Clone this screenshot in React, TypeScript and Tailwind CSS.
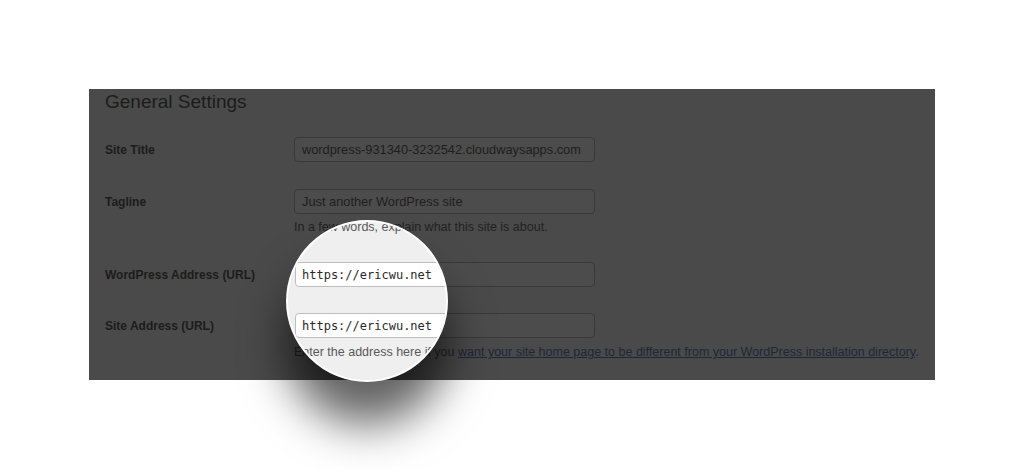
const rows = [
  { label: 'Site Title', value: 'wordpress-931340-3232542.cloudwaysapps.com', mt: 'mt-[23px]' },
  { label: 'Tagline', value: 'Just another WordPress site', mt: 'mt-[27px]' },
];

function DarkInput({ value }: { value?: string }) {
  return (
    <div className="w-[301px] h-[25px] rounded-[4px] border border-[#393939] bg-[#4c4c4c] px-[7px] flex items-center text-[12.8px] text-[#1e1e1e] whitespace-nowrap overflow-hidden">
      {value}
    </div>
  );
}

function Magnifier() {
  return (
    <div className="absolute left-[197px] top-[131px] w-[162px] h-[162px] rounded-full border-2 border-white bg-[#efefef] overflow-hidden shadow-[0_42px_46px_rgba(0,0,0,0.62)]">
      <p className="absolute left-[6px] top-[-4px] leading-[18px] text-[12.5px] text-[#5a5a5a] whitespace-nowrap">
        In a few words, explain what
      </p>
      {[40, 91].map(t => (
        <div
          key={t}
          className="absolute left-[7px] w-[300px] h-[25px] rounded-[4px] border border-[#bdbdbd] bg-white pl-[6px] flex items-center text-[12px] text-[#2a2a2a] whitespace-nowrap"
          style={{ top: t, fontFamily: '"DejaVu Sans Mono", monospace' }}
        >
          https://ericwu.net
        </div>
      ))}
      <p className="absolute left-[6px] top-[121px] leading-[18px] text-[12.5px] text-[#5a5a5a] whitespace-nowrap">
        Enter the address here if you
      </p>
    </div>
  );
}

export default function App() {
  return (
    <div className="w-[1024px] h-[470px] bg-white overflow-hidden pt-[89px]" style={{ fontFamily: '"Liberation Sans", Arial, sans-serif' }}>
      <div className="relative ml-[89px] w-[846px] bg-[#4a4a4a] pl-[16px] pt-[1px] pb-[19px] text-[#1c1c1c]">
        <h1 className="text-[19px] leading-[24px]">General Settings</h1>

        {rows.map(r => (
          <div key={r.label} className={`${r.mt} flex items-center`}>
            <span className="w-[189px] text-[12px] font-bold">{r.label}</span>
            <DarkInput value={r.value} />
          </div>
        ))}
        <p className="mt-[4px] ml-[189px] text-[12.5px] leading-[18px] text-[#222]">
          In a few words, explain what this site is about.
        </p>

        <div className="mt-[26px] flex items-center">
          <span className="w-[189px] text-[12px] font-bold">WordPress Address (URL)</span>
          <DarkInput />
        </div>
        <div className="mt-[26px] flex items-center">
          <span className="w-[189px] text-[12px] font-bold">Site Address (URL)</span>
          <DarkInput />
        </div>
        <p className="mt-[5px] ml-[189px] text-[12.5px] leading-[18px] text-[#222] whitespace-nowrap">
          Enter the address here if you{' '}
          <span className="underline text-[#1b2838]">
            want your site home page to be different from your WordPress installation directory
          </span>
          .
        </p>

        <Magnifier />
      </div>
    </div>
  );
}
